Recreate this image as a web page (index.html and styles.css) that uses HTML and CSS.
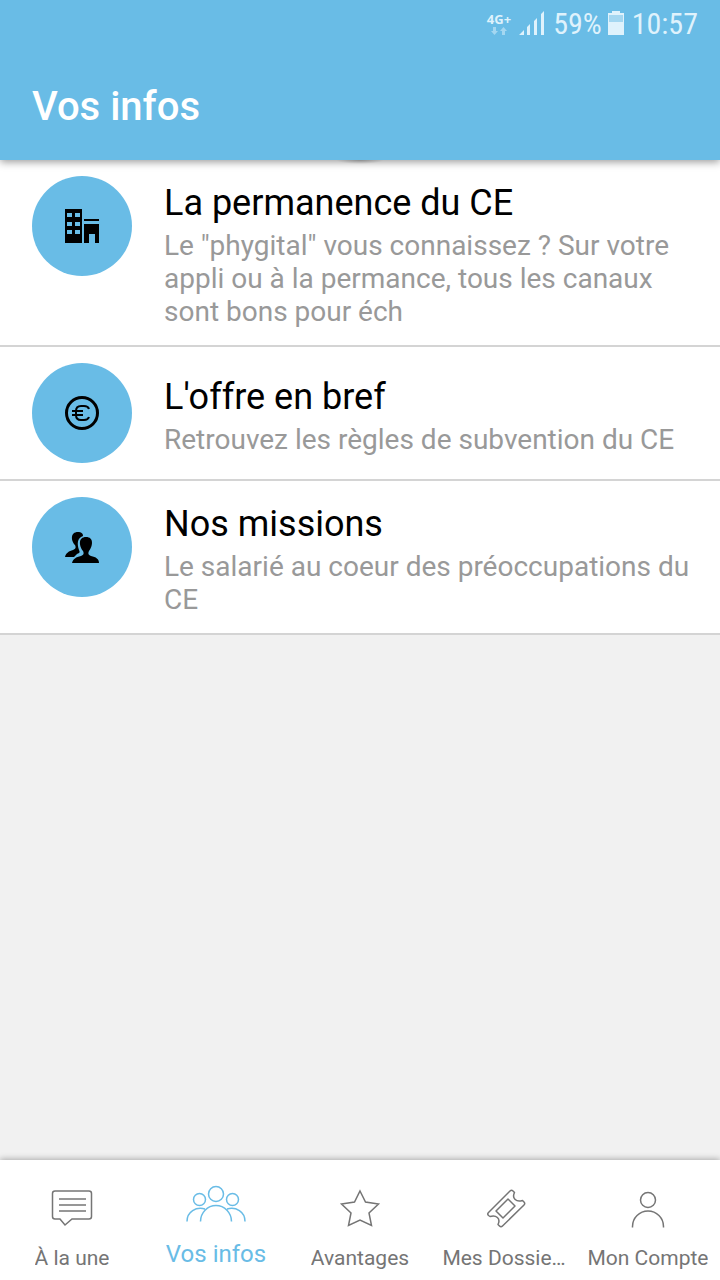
FILE: index.html
```html
<!doctype html>
<html lang="fr">
<head>
	<meta charset="utf-8">
	<meta name="viewport" content="width=device-width, initial-scale=1.0">
	<title>Vos infos</title>

	<link rel="stylesheet" href="styles.css">

</head>

<body>

	<header class="header">
		<div class="status-bar">
			<div class="network">
				<span>4G+</span>
				<svg width="16" height="8" viewBox="0 0 16 8"><path d="M2 0h3v4h2L3.500 8 0 4h2zM11 8h3V4h2l-3.500-4L9 4h2z"/></svg>
			</div>
			<svg class="signal" width="26" height="24" viewBox="0 0 26 24"><path d="M0 24l5-5v5zM8 16l3-3v11H8zM15 10l3-3v17h-3zM22 3l3-3v24h-3z"/></svg>
			<span>59%</span>
			<svg class="battery" width="16" height="24" viewBox="0 0 16 24"><path opacity=".5" d="M0 2h4V0h8v2h4v10H0z"/><path d="M0 11h16v13H0zM0 2h4V0h8v2h4v9h-1V4H1v7H0z"/></svg>
			<span class="clock">10:57</span>
		</div>
		<h1>Vos infos</h1>
	</header>

	<main>
		<ul class="list">
			<li class="item">
				<div class="avatar">
					<svg width="36" height="36" viewBox="0 0 36 36"><path fill-rule="evenodd" d="M1 1h17v34H1zM3 5v4h5V5zM11 5v4h5V5zM3 14v4h5v-4zM11 14v4h5v-4zM3 22v4h5v-4zM11 22v4h5v-4zM20 11h15v2H20zM20 16h15v19h-4v-9h-6v9h-5z"/></svg>
				</div>
				<div class="item-text">
					<h2>La permanence du CE</h2>
					<p>Le "phygital" vous connaissez ? Sur votre appli ou à la permance, tous les canaux sont bons pour éch</p>
				</div>
			</li>
			<li class="item">
				<div class="avatar">
					<svg width="36" height="36" viewBox="0 0 36 36" fill="none" stroke="#000"><circle cx="18" cy="18" r="15.500" stroke-width="3"/><path stroke-width="2" d="M25 14q-1-3-5-3h-3q-5 0-5 5v4q0 5 5 5h3q4 0 5-3M8 16h11M8 20h11"/></svg>
				</div>
				<div class="item-text">
					<h2>L'offre en bref</h2>
					<p>Retrouvez les règles de subvention du CE</p>
				</div>
			</li>
			<li class="item">
				<div class="avatar">
					<svg width="36" height="36" viewBox="0 0 36 36"><path d="M1 28c1-4 4-6 8-7 3-1 3-3 2-5-4-4-5-13 3-13 3 0 5 1 5 4-6 2-6 8-4 14 1 2 1 3-2 4l-3 3z"/><path d="M8 34c1-4 4-6 9-7 3-1 3-3 2-5-4-5-5-14 3-14s7 9 3 14c-1 2-1 4 2 5 5 1 8 3 8 7z"/></svg>
				</div>
				<div class="item-text">
					<h2>Nos missions</h2>
					<p>Le salarié au coeur des préoccupations du CE</p>
				</div>
			</li>
		</ul>
	</main>

	<nav class="tabs">
		<a class="tab" href="#">
			<svg width="60" height="40" viewBox="0 0 60 40"><path d="M13 3h34q2.500 0 2.500 2.500v23q0 2.500-2.500 2.500H30l-7 6-5-6h-5q-2.500 0-2.500-2.500v-23Q10.500 3 13 3zM17 11h27M17 17h27M17 23h27"/></svg>
			<span>À la une</span>
		</a>
		<a class="tab active" href="#">
			<svg width="60" height="40" viewBox="0 0 60 40"><circle cx="30" cy="10" r="7.500"/><circle cx="13.500" cy="15.500" r="6"/><circle cx="46.500" cy="15.500" r="6"/><path d="M14.500 37.500a15.500 16 0 0 1 31 0M1 37.500c0-10 9-15 18-12.500M59 37.500c0-10-9-15-18-12.500"/></svg>
			<span>Vos infos</span>
		</a>
		<a class="tab" href="#">
			<svg width="60" height="40" viewBox="0 0 60 40"><path d="M30 3l5.500 11 13 2-9.500 9 2.500 12.500L30 32l-11.500 5.500L21 25l-9.500-9 13-2z"/></svg>
			<span>Avantages</span>
		</a>
		<a class="tab" href="#">
			<svg width="60" height="40" viewBox="0 0 60 40" stroke-linejoin="round"><path d="M14.500 24.500L36 3q1.500-1.500 3 0l1.500 1.500c-3 6 2 10 8 8L50 14q1.500 1.500 0 3L28.500 38q-1.500 1.500-3 0L24 36.500c3-6-2-10-8-8l-1.500-1q-1.500-1.500 0-3z"/><path d="M22 23l12-12 7 7-12 12z"/></svg>
			<span>Mes Dossie…</span>
		</a>
		<a class="tab" href="#">
			<svg width="60" height="40" viewBox="0 0 60 40"><circle cx="30" cy="12" r="7.500"/><path d="M14.500 39.500v-1a15.500 15.500 0 0 1 31 0v1"/></svg>
			<span>Mon Compte</span>
		</a>
	</nav>

</body>
</html>
```
FILE: styles.css
```css
* {
	box-sizing: border-box;
}
body {
	display: flex;
	flex-direction: column;
	min-height: 100vh;
	margin: 0;
	background: #f1f1f1;
	font-family: Roboto, sans-serif;
	color: #000;
}
h1, h2, p, ul {
	margin: 0;
	padding: 0;
	font-weight: normal;
}
svg {
	display: block;
	flex-shrink: 0;
}
main {
	flex: 1;
}

.header {
	position: relative;
	background: #69bce6;
	color: #fff;
	box-shadow: 0 2px 8px rgba(0, 0, 0, .4);
}
/* edge of the pull to refresh spinner */
.header::after {
	content: "";
	position: absolute;
	top: 100%;
	left: 50%;
	width: 48px;
	height: 4px;
	margin-left: -24px;
	background: radial-gradient(ellipse at top, rgba(0, 0, 0, .25), transparent 70%);
}
.header h1 {
	padding: 8px 32px 0 32px;
	font-size: 40px;
	font-weight: 500;
	line-height: 106px;
}
.status-bar {
	display: flex;
	justify-content: flex-end;
	align-items: center;
	height: 46px;
	padding-right: 22px;
	font-family: "Roboto Condensed", Roboto, sans-serif;
	font-size: 30px;
	color: #dff2fc;
}
.status-bar svg {
	fill: #dff2fc;
}
.network {
	display: flex;
	flex-direction: column;
	align-items: center;
	font-family: "Open Sans", sans-serif;
	font-size: 13px;
	font-weight: bold;
	line-height: 16px;
}
.network svg {
	opacity: .5;
}
.signal {
	margin: 0 8px;
}
.battery {
	margin: 0 8px 0 6px;
}

.list {
	list-style: none;
}
.item {
	display: flex;
	gap: 32px;
	padding: 16px 24px 16px 32px;
	background: #fff;
	border-bottom: 2px solid #d4d4d4;
}
.avatar {
	display: flex;
	flex-shrink: 0;
	align-items: center;
	justify-content: center;
	width: 100px;
	height: 100px;
	border-radius: 50%;
	background: #69bce6;
}
.item-text {
	flex: 1;
	align-self: center;
	padding: 1px 0;
}
.item h2 {
	font-size: 36px;
	line-height: 52px;
}
.item p {
	font-size: 28px;
	line-height: 33px;
	color: #999;
}

.tabs {
	display: flex;
	position: relative;
	height: 120px;
	background: #fff;
	box-shadow: 0 -1px 6px rgba(0, 0, 0, .3);
}
.tab {
	display: flex;
	flex: 1;
	flex-direction: column;
	align-items: center;
	gap: 16px;
	min-width: 0;
	padding: 28px 8px 0 8px;
	font-size: 21px;
	line-height: 28px;
	color: #757575;
	text-decoration: none;
}
.tab span {
	max-width: 100%;
	overflow: hidden;
	white-space: nowrap;
	text-overflow: ellipsis;
}
.tab svg {
	fill: none;
	stroke: currentColor;
	stroke-width: 1.5;
}
.tab.active {
	padding-top: 24px;
	font-size: 24px;
	color: #69bce6;
}
```
